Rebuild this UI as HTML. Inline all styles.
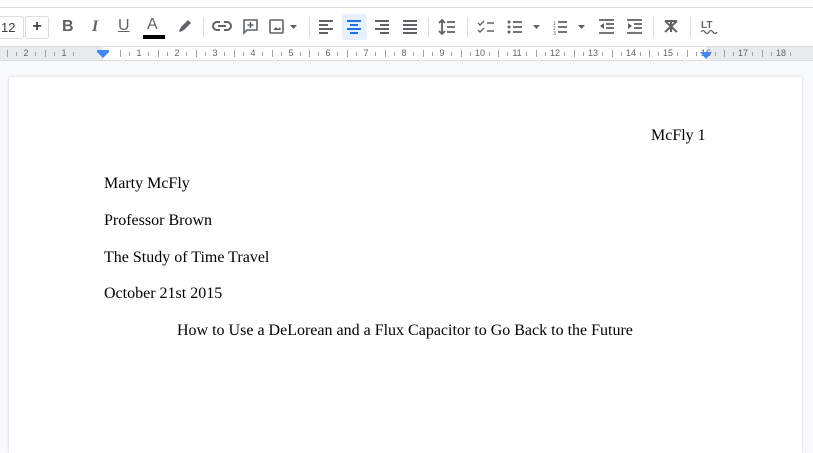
<!DOCTYPE html>
<html><head><meta charset="utf-8"><style>
*{margin:0;padding:0;box-sizing:border-box}
html,body{width:813px;height:453px;overflow:hidden}
body{background:#f8f9fa;position:relative;font-family:"Liberation Sans",sans-serif}
.top{position:absolute;left:0;top:0;width:813px;height:8px;background:#fff;border-bottom:1px solid #dadce0}
.tb{position:absolute;left:0;top:8px;width:813px;height:39px;background:#fff;border-bottom:1px solid #dadce0}
.ab{position:absolute}
.sep{position:absolute;top:17px;width:1px;height:20px;background:#dadce0}
.ruler{position:absolute;left:0;top:47px;width:813px;height:14px;background:#e8eaed;border-bottom:1px solid #dadce0}
.rw{position:absolute;left:103px;top:0;width:603px;height:13px;background:#fff}
.rn{position:absolute;top:0;font-size:9px;color:#5f6368;line-height:13px;transform:translateX(-50%)}
.tk{position:absolute;top:5px;width:1px;height:4px;background:#9aa0a6}
.page{position:absolute;left:9px;top:77px;width:793px;height:376px;background:#fff;box-shadow:0 0 2px rgba(60,64,67,.25)}
.t{position:absolute;font-family:"Liberation Serif",serif;font-size:16px;color:#000;white-space:nowrap;line-height:18px}
svg{position:absolute}
</style></head><body>
<div class="top"></div>
<div class="tb">
 <div class="ab" style="left:-1px;top:8px;width:25px;height:23px;border:1px solid #dadce0;border-radius:0 3px 3px 0;font-size:13px;color:#3c4043;line-height:21px;padding-left:1px">12</div>
 <div class="ab" style="left:25px;top:8px;width:24px;height:23px;border:1px solid #dadce0;border-radius:3px;font-size:16px;font-weight:bold;color:#3c4043;line-height:20px;text-align:center">+</div>
 <div class="ab" style="left:62px;top:10px;font-size:16px;font-weight:bold;color:#5f6368">B</div>
 <div class="ab" style="left:92px;top:10px;font-size:16px;font-style:italic;font-family:'Liberation Serif',serif;font-weight:bold;color:#5f6368">I</div>
 <div class="ab" style="left:118px;top:9px;font-size:16px;color:#5f6368;text-decoration:underline">U</div>
 <div class="ab" style="left:147px;top:8px;font-size:16px;color:#5f6368">A</div>
 <div class="ab" style="left:143px;top:27px;width:22px;height:4px;background:#000"></div>
 <svg style="left:176px;top:10px" width="16" height="16" viewBox="0 0 16 16"><path d="M3 13l2-4 5-5 3 3-5 5-4 2z M10 4l2-2 3 3-2 2z" fill="#5f6368"/></svg>
 <div class="sep" style="left:203px;top:9px"></div>
 <svg style="left:212px;top:11px" width="20" height="14" viewBox="0 0 20 14"><path d="M8 3H5a4 4 0 0 0 0 8h3M12 3h3a4 4 0 0 1 0 8h-3M6 7h8" stroke="#5f6368" stroke-width="2" fill="none"/></svg>
 <svg style="left:242px;top:10px" width="17" height="17" viewBox="0 0 17 17"><path d="M2 2h13v10H5l-3 3z" stroke="#5f6368" stroke-width="1.6" fill="none"/><path d="M8.5 4v6M5.5 7h6" stroke="#5f6368" stroke-width="1.6"/></svg>
 <svg style="left:269px;top:10px" width="32" height="17" viewBox="0 0 32 17"><rect x="1" y="2" width="13" height="13" stroke="#5f6368" stroke-width="1.6" fill="none" rx="1"/><path d="M4 12l3-3 2 2 2-2 1 3z" fill="#5f6368"/><path d="M21 7h7l-3.5 4z" fill="#5f6368"/></svg>
 <div class="sep" style="left:309px;top:9px"></div>
 <div class="ab" style="left:342px;top:6px;width:25px;height:26px;background:#e8f0fe;border-radius:3px"></div>
 <svg style="left:318px;top:11px" width="110" height="16" viewBox="0 0 110 16">
  <g stroke="#5f6368" stroke-width="2"><path d="M1 2h14M1 6h9M1 10h14M1 14h9"/></g>
  <g stroke="#1a73e8" stroke-width="2"><path d="M29 2h14M32 6h8M29 10h14M32 14h8"/></g>
  <g stroke="#5f6368" stroke-width="2"><path d="M57 2h14M62 6h9M57 10h14M62 14h9"/><path d="M85 2h14M85 6h14M85 10h14M85 14h14"/></g>
 </svg>
 <div class="sep" style="left:428px;top:9px"></div>
 <svg style="left:438px;top:10px" width="18" height="18" viewBox="0 0 18 18"><path d="M4 2v14M1 5l3-3 3 3M1 13l3 3 3-3" stroke="#5f6368" stroke-width="1.8" fill="none"/><path d="M9 4h8M9 9h8M9 14h8" stroke="#5f6368" stroke-width="1.8"/></svg>
 <div class="sep" style="left:467px;top:9px"></div>
 <svg style="left:477px;top:11px" width="120" height="16" viewBox="0 0 120 16">
  <path d="M1 4l2 2 4-4M1 11l2 2 4-4" stroke="#5f6368" stroke-width="1.4" fill="none"/><path d="M10 4h7M10 12h7" stroke="#5f6368" stroke-width="1.6"/>
  <g fill="#5f6368"><circle cx="32" cy="3" r="1.5"/><circle cx="32" cy="8" r="1.5"/><circle cx="32" cy="13" r="1.5"/></g><path d="M36 3h9M36 8h9M36 13h9" stroke="#5f6368" stroke-width="1.8"/>
  <path d="M56 6h7l-3.5 4z" fill="#5f6368"/>
  <text x="76" y="6" font-size="5" fill="#5f6368" font-family="Liberation Sans">1</text><text x="76" y="11" font-size="5" fill="#5f6368" font-family="Liberation Sans">2</text><text x="76" y="16" font-size="5" fill="#5f6368" font-family="Liberation Sans">3</text>
  <path d="M81 3h9M81 8h9M81 13h9" stroke="#5f6368" stroke-width="1.8"/>
  <path d="M101 6h7l-3.5 4z" fill="#5f6368"/>
 </svg>
 <svg style="left:598px;top:10px" width="50" height="17" viewBox="0 0 50 17">
  <g stroke="#5f6368" stroke-width="1.8"><path d="M1 2h15M8 6h8M8 10h8M1 15h15M29 2h15M36 6h8M36 10h8M29 15h15"/></g>
  <path d="M6 5l-4 3 4 3z M30 5l4 3-4 3z" fill="#5f6368"/>
 </svg>
 <div class="sep" style="left:653px;top:9px"></div>
 <svg style="left:663px;top:11px" width="16" height="15" viewBox="0 0 16 15"><path d="M2 2h12M8 2v11M2 13L14 2M2 2l12 11" stroke="#5f6368" stroke-width="2" fill="none"/></svg>
 <div class="sep" style="left:690px;top:9px"></div>
 <svg style="left:700px;top:10px" width="18" height="17" viewBox="0 0 18 17"><text x="1" y="10" font-size="10" font-weight="bold" fill="#5f6368" font-family="Liberation Sans">LT</text><path d="M1 14q2-3 4 0t4 0 4 0 4 0" stroke="#5f6368" stroke-width="1.3" fill="none"/></svg>
</div>
<div class="ruler"><div class="rw"></div>
 <div id="r"></div>
 <svg style="left:96px;top:3px" width="14" height="8" viewBox="0 0 14 8"><path d="M1 0h12v2l-6 6-6-6z" fill="#4285f4"/></svg>
 <svg style="left:700px;top:5px" width="12" height="7" viewBox="0 0 12 7"><path d="M0 0h12l-6 7z" fill="#4285f4"/></svg>
</div>
<script>
var r=document.getElementById('r'),h='';
var labels=[[26,'2'],[64,'1'],[139,'1'],[177,'2'],[215,'3'],[253,'4'],[291,'5'],[328,'6'],[366,'7'],[404,'8'],[442,'9'],[480,'10'],[517,'11'],[555,'12'],[593,'13'],[631,'14'],[668,'15'],[706,'16'],[743,'17'],[781,'18']];
labels.forEach(function(l){h+='<div class="rn" style="left:'+l[0]+'px">'+l[1]+'</div>';h+='<div class="tk" style="left:'+(l[0]-19)+'px;top:3px;height:7px"></div>';h+='<div class="tk" style="left:'+(l[0]-10)+'px"></div><div class="tk" style="left:'+(l[0]+9)+'px"></div>';});
r.innerHTML=h;
</script>
<div class="page">
 <div class="t" style="left:642px;top:50px">McFly 1</div>
 <div class="t" style="left:95px;top:98px">Marty McFly</div>
 <div class="t" style="left:95px;top:135px">Professor Brown</div>
 <div class="t" style="left:95px;top:172px">The Study of Time Travel</div>
 <div class="t" style="left:95px;top:208px">October 21st 2015</div>
 <div class="t" style="left:168px;top:245px">How to Use a DeLorean and a Flux Capacitor to Go Back to the Future</div>
</div>
</body></html>
